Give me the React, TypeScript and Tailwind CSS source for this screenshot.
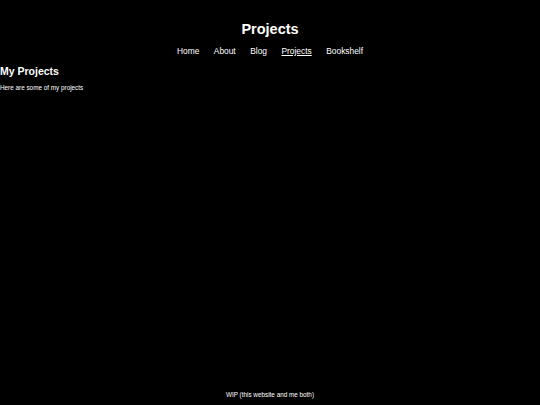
export default function App() {
  const links = ['Home', 'About', 'Blog', 'Projects', 'Bookshelf'];
  return (
    <div className="min-h-screen bg-black text-white flex flex-col" style={{ fontFamily: '"Liberation Sans", Arial, sans-serif' }}>
      <header className="flex flex-col items-center pt-[19px]">
        <h1 className="text-[14.5px] font-bold leading-[20px]">Projects</h1>
        <nav className="flex gap-[14.5px] mt-[6px] text-[8.4px] leading-[12px]">
          {links.map((l) => (
            <a key={l} className={l === 'Projects' ? 'underline' : ''}>
              {l}
            </a>
          ))}
        </nav>
      </header>
      <main className="mt-[7px]">
        <h2 className="text-[10.5px] font-bold leading-[14px]">My Projects</h2>
        <p className="text-[6.35px] leading-[9px] mt-[5px]">Here are some of my projects</p>
      </main>
      <footer className="mt-auto mb-[6px] text-center text-[6.35px] leading-[9px]">
        WIP (this website and me both)
      </footer>
    </div>
  );
}
